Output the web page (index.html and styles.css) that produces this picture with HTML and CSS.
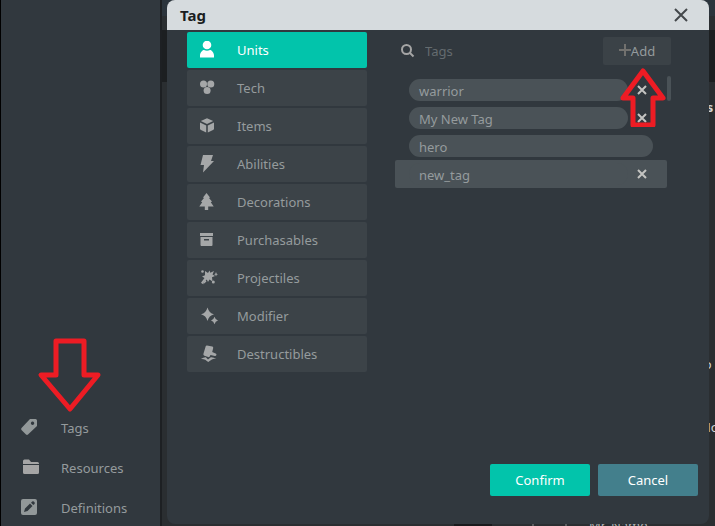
FILE: index.html
```html
<!DOCTYPE html>
<html lang="en">
<head>
<meta charset="utf-8">
<title>Tag</title>
<link rel="stylesheet" href="styles.css">
</head>
<body>
<div class="app">
  <nav class="sidebar">
    <a class="side-link" href="#tags">
      <svg class="icon" viewBox="0 0 18 18"><path fill-rule="evenodd" d="M10 1h5.500q1.500 0 1.500 1.500V8L8 16.500q-1 .8-2 0L1.500 12q-.8-1 0-2zM12.500 3.500a1.700 1.700 0 1 0 .1 0z"/></svg>
      <span>Tags</span>
    </a>
    <a class="side-link" href="#resources">
      <svg class="icon folder" viewBox="0 0 18 18"><path d="M1 6V3q0-1.500 1.500-1.500H7L9 4h6.500Q17 4 17 5.500V6zM1 7h16v7.500q0 1.500-1.500 1.500h-13Q1 16 1 14.500z"/></svg>
      <span>Resources</span>
    </a>
    <a class="side-link" href="#definitions">
      <svg class="icon" viewBox="0 0 18 18"><rect x="1" y="1" width="16" height="16" rx="2"/><path class="cut" d="M4 14l1-3.500L10 5.500 12.500 8l-5 5zM11 4.800l1.200-1.200q.8-.6 1.600 0l.7.7q.6.800 0 1.600L13.300 7.100z"/></svg>
      <span>Definitions</span>
    </a>
  </nav>
  <main class="workspace">
    <div class="toolbar"></div>
    <div class="tabs"></div>
    <div class="properties">
      <strong class="property">es</strong>
      <span class="property">to</span>
      <span class="property">Mo</span>
    </div>
    <div class="name-row"><span class="name-cell"></span><span class="divider"></span><span>Mr. Name</span></div>
  </main>
</div>

<section class="modal" role="dialog" aria-labelledby="modal-title">
  <header class="modal-head">
    <h1 id="modal-title">Tag</h1>
    <button class="close" type="button" aria-label="Close"><svg viewBox="0 0 14 14"><path d="M1 1l12 12M13 1L1 13"/></svg></button>
  </header>
  <div class="modal-body">
    <div class="categories">
      <button class="category active" type="button"><svg class="icon" viewBox="0 0 18 18"><circle cx="8" cy="4" r="4.300"/><path d="M1 16.500v-2C1 11 4 9 5 9q3 1.600 6 0c1 0 4 2 4 5.500v2z"/></svg><span>Units</span></button>
      <button class="category" type="button"><svg class="icon" viewBox="0 0 18 18"><circle cx="4.500" cy="5" r="3.500"/><circle cx="11.800" cy="5" r="3.500"/><circle cx="8.100" cy="11.500" r="3.500"/></svg><span>Tech</span></button>
      <button class="category" type="button"><svg class="icon" viewBox="0 0 18 18"><path d="M1.800 4L8 1.200 14.200 4 8 7zM1 5.500l6.200 3v7L2 13q-1-.5-1-1.500zM15 5.500l-6.200 3v7L14 13q1-.5 1-1.500z"/></svg><span>Items</span></button>
      <button class="category" type="button"><svg class="icon" viewBox="0 0 18 18"><path d="M4 0h10l-2 6h3L4 17.500 5 10H1.500z"/></svg><span>Abilities</span></button>
      <button class="category" type="button"><svg class="icon" viewBox="0 0 18 18"><path d="M7.500 0L11 4.500 10 5l3 3.500-1.200.7 2.900 4.300h-5.500V17H5.800v-3.500H.3l2.900-4.300L2 8.500 5 5 4 4.500z"/></svg><span>Decorations</span></button>
      <button class="category" type="button"><svg class="icon" viewBox="0 0 18 18"><path fill-rule="evenodd" d="M1 2h13v3H1zM1.500 6h12v8q0 1-1 1h-10q-1 0-1-1zM5 8v1.500h5V8z"/></svg><span>Purchasables</span></button>
      <button class="category" type="button"><svg class="icon wide" viewBox="0 0 18 18"><path d="M5 2l3 2 1.500-2.500.8 2.300L14 2l-1.500 3.500L15 7l-3 1.300.5 4.200-3-2L8 13l-1.200-2.500L2.500 15 1 13.800 4.500 9 2 7.500l3-1.300z"/><circle cx="2.500" cy="2.500" r="1.300"/><circle cx="13.300" cy="13" r="1.500"/><path d="M16 3l.7 1.700 1.300.5-1.300.6L16 7.500l-.7-1.700-1.300-.6 1.300-.5zM5 11l1.500 1.500L3 15.500z"/></svg><span>Projectiles</span></button>
      <button class="category" type="button"><svg class="icon wide" viewBox="0 0 18 18"><path d="M7.500.5Q9 6 14 7.300 9 8.600 7.500 14 6 8.600 1 7.300 6 6 7.500.5zM14.500 9.800q.8 3 3.500 3.700-2.700.7-3.500 3.700-.8-3-3.500-3.700 2.700-.7 3.500-3.700z"/></svg><span>Modifier</span></button>
      <button class="category" type="button"><svg class="icon wide" viewBox="0 0 18 18"><path d="M7 .5q-1-.1-1.300.8L3.400 9q-.3 1.300 1 1.800l3.800 1.300q1 .3 1.500-.5l.8-1.600 4.300 1q1.200.2 1.600-1 .3-1.200-.8-1.600L12.200 7l1-4q.2-1.200-.9-1.400z"/><path d="M.8 14q3-2 5-1.800L8 14.500l2.800-2.200q3-.2 5.400 1.700-2.700-.5-4.700.8L8.200 17l-3-2.300Q3 13.600.8 14z"/></svg><span>Destructibles</span></button>
    </div>
    <div class="tag-pane">
      <div class="search-row">
        <label class="search">
          <svg viewBox="0 0 14 14" aria-hidden="true"><circle cx="5.500" cy="5.500" r="4.500"/><path d="M9 9l3.500 3.500"/></svg>
          <input type="text" placeholder="Tags" aria-label="Search tags">
        </label>
        <button class="add" type="button"><svg viewBox="0 0 12 12" aria-hidden="true"><path d="M6 0v12M0 6h12"/></svg><span>Add</span></button>
      </div>
      <div class="list-wrap">
        <ul class="tags">
          <li class="tag"><span class="pill">warrior</span><button class="remove" type="button" aria-label="Remove warrior"><svg viewBox="0 0 10 10"><path d="M1 1l8 8M9 1L1 9"/></svg></button></li>
          <li class="tag"><span class="pill">My New Tag</span><button class="remove" type="button" aria-label="Remove My New Tag"><svg viewBox="0 0 10 10"><path d="M1 1l8 8M9 1L1 9"/></svg></button></li>
          <li class="tag fixed"><span class="pill">hero</span></li>
          <li class="tag selected"><span class="pill">new_tag</span><button class="remove" type="button" aria-label="Remove new_tag"><svg viewBox="0 0 10 10"><path d="M1 1l8 8M9 1L1 9"/></svg></button></li>
        </ul>
        <div class="thumb"></div>
      </div>
    </div>
  </div>
  <footer class="modal-foot">
    <button class="action confirm" type="button">Confirm</button>
    <button class="action cancel" type="button">Cancel</button>
  </footer>
</section>

<svg class="arrow arrow-down" viewBox="0 0 66 76"><path d="M19 4h28v34h14L33 72 4 38h15z"/></svg>
<svg class="arrow arrow-up" viewBox="0 0 46 60"><path d="M23 4l20 27H33v27H13V31H3z"/></svg>
</body>
</html>
```

FILE: styles.css
```css
* { box-sizing: border-box; }

html, body { height: 100%; }

body {
  margin: 0;
  overflow: hidden;
  position: relative;
  background: #2a2e31;
  color: #959b9d;
  font: 13px/18px "Noto Sans", "Open Sans", sans-serif;
}

button, input {
  font: inherit;
  color: inherit;
  border: 0;
  padding: 0;
  background: none;
}

.icon { width: 18px; height: 18px; flex: none; fill: #a5a7a8; }

.app {
  display: grid;
  grid-template-columns: 162px 1fr;
  height: 100%;
}

.sidebar {
  display: flex;
  flex-direction: column;
  justify-content: flex-end;
  gap: 4px;
  background: #31383e;
  border-left: 1px solid #000;
  border-right: 2px solid #1d2023;
}

.side-link {
  display: flex;
  align-items: center;
  gap: 23px;
  height: 36px;
  padding-left: 19px;
  color: inherit;
  text-decoration: none;
}

.side-link .icon { fill: #929899; margin-bottom: 2px; }
.side-link .folder { width: 22px; margin-right: -4px; fill: #a5a5a5; }
.side-link .cut { fill: #31383e; }

.workspace { display: flex; flex-direction: column; min-width: 0; overflow: hidden; }
.toolbar { height: 30px; background: linear-gradient(#2b343c 16px, #2a2e31 16px); }
.tabs { height: 52px; background: #1c1f21; }

.properties {
  flex: 1;
  display: grid;
  grid-template-rows: 257px 63px 1fr;
  justify-content: end;
  padding-top: 16px;
  color: #d0d3d4;
}

.property { width: 16px; }

.name-row {
  display: flex;
  height: 10px;
  padding-left: 292px;
  color: #aeb2b3;
}

.name-cell { width: 38px; background: #191a1c; }

.divider {
  width: 35px;
  margin: 0 22px 0 40px;
  border: solid #5a5d5f;
  border-width: 0 2px;
}

.modal {
  position: absolute;
  inset: 0 6px 2px 167px;
  display: flex;
  flex-direction: column;
  overflow: hidden;
  border-radius: 8px;
  background: #31383e;
}

.modal-head {
  display: flex;
  align-items: center;
  justify-content: space-between;
  height: 30px;
  padding: 0 21px 0 13px;
  background: #d6dbde;
  color: #1b1d1f;
}

.modal-head h1 { margin: 0; font-size: 15px; line-height: 20px; }
.close { width: 14px; height: 14px; }
.close svg { display: block; fill: none; stroke: #44484b; stroke-width: 2; }

.modal-body {
  flex: 1;
  display: grid;
  grid-template-columns: 180px minmax(0, 1fr);
  align-items: start;
  gap: 28px;
  padding: 2px 38px 0 20px;
}

.categories { display: flex; flex-direction: column; gap: 2px; }

.category {
  display: flex;
  align-items: center;
  gap: 20px;
  height: 36px;
  padding-left: 12px;
  border-radius: 2px;
  background: #3c4348;
  text-align: left;
}

.category .wide { width: 20px; margin-right: -2px; }
.category.active { background: #02c4ab; color: #fff; }
.category.active .icon { fill: #fff; }

.tag-pane { padding-top: 5px; }
.search-row { display: flex; justify-content: space-between; }

.search {
  flex: 1;
  display: flex;
  align-items: center;
  gap: 10px;
  min-width: 0;
  padding-left: 6px;
}

.search svg { width: 14px; height: 14px; flex: none; fill: none; stroke: #a5a5a5; stroke-width: 2; }
.search input { flex: 1; min-width: 0; outline: 0; }
.search input::placeholder { color: #646b6f; opacity: 1; }

.add {
  display: flex;
  align-items: center;
  justify-content: center;
  width: 68px;
  height: 28px;
  border-radius: 2px;
  background: #3b4247;
}

.add svg { width: 12px; height: 12px; margin-bottom: 2px; fill: none; stroke: #72716e; stroke-width: 2; }

.list-wrap { display: flex; padding-top: 11px; }
.tags { flex: 1; margin: 0; padding: 0; list-style: none; }

.tag {
  display: flex;
  align-items: center;
  height: 28px;
  padding: 0 11px 0 14px;
}

.tag.fixed { padding-right: 14px; }

.pill {
  flex: 1;
  height: 22px;
  padding: 3px 10px 0;
  border-radius: 11px;
  background: #4a5257;
}

.selected { border-radius: 2px; background: #4a5257; }

.remove { display: flex; justify-content: center; width: 28px; }
.remove svg { width: 10px; height: 10px; fill: none; stroke: #c4c4c2; stroke-width: 2; }

.thumb { width: 4px; height: 25px; border-radius: 2px; background: #4a5257; }

.modal-foot {
  display: flex;
  justify-content: flex-end;
  gap: 8px;
  padding: 0 11px 28px;
}

.action { width: 100px; height: 32px; border-radius: 2px; color: #fff; }
.confirm { background: #02c4ab; }
.cancel { background: #437f8c; }

.arrow {
  position: absolute;
  fill: none;
  stroke: #ed1c24;
  stroke-width: 5;
  stroke-linejoin: round;
  pointer-events: none;
}

.arrow-down { left: 37px; top: 337px; width: 66px; height: 76px; }
.arrow-up { left: 620px; top: 67px; width: 46px; height: 60px; }
```
